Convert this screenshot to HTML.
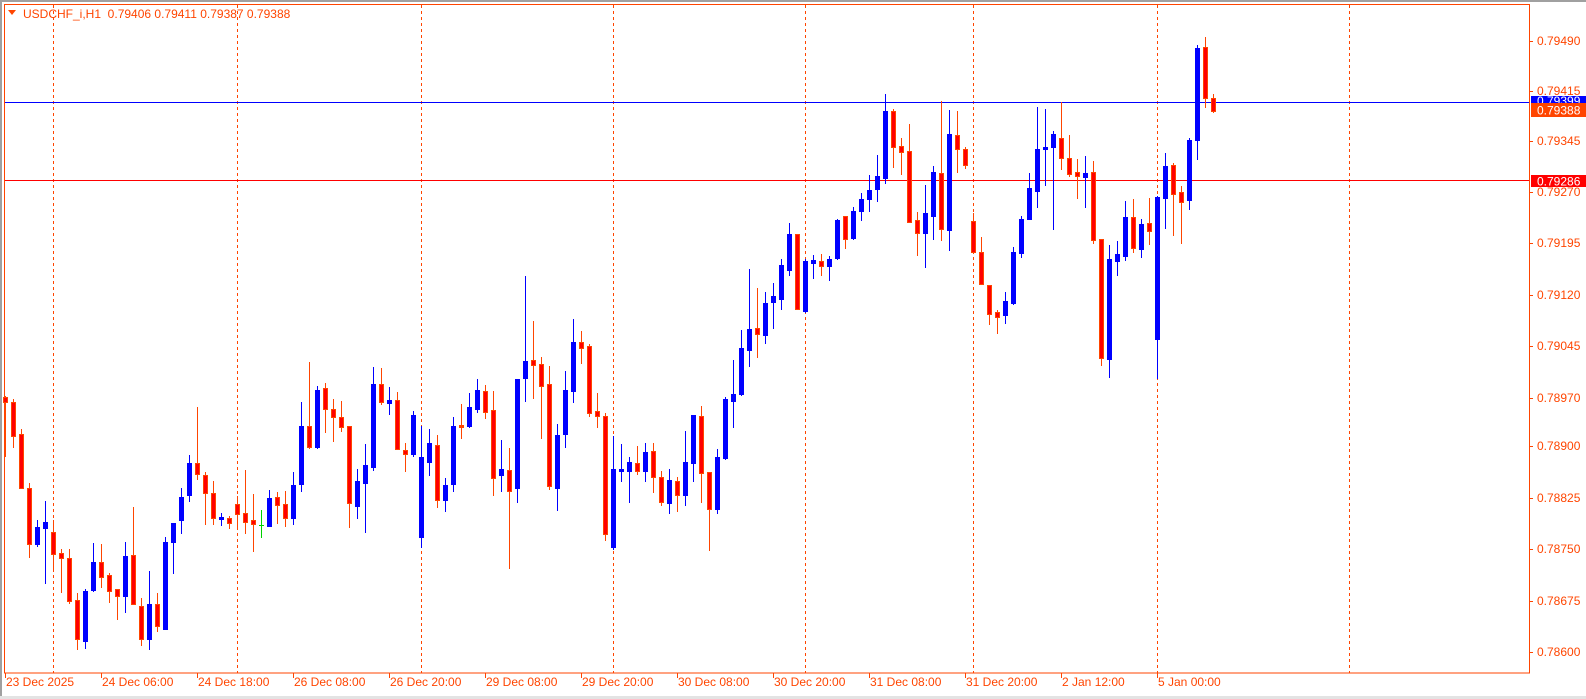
<!DOCTYPE html>
<html><head><meta charset="utf-8"><style>
html,body{margin:0;padding:0;background:#fff;width:1586px;height:699px;overflow:hidden}
svg{display:block;font-family:"Liberation Sans",sans-serif;font-size:12px}
</style></head><body>
<svg id="s" width="1586" height="699" xmlns="http://www.w3.org/2000/svg">
<rect x="0" y="0" width="1586" height="699" fill="#fff"/>
<rect x="0" y="0" width="1586" height="2" fill="#a0a0a0"/>
<rect x="0" y="0" width="2" height="699" fill="#a0a0a0"/>
<rect x="0" y="696" width="1586" height="3" fill="#e3e3e3"/>
<g stroke="#FF4500" stroke-width="1" stroke-dasharray="3,3">
<line x1="53.5" y1="5" x2="53.5" y2="673"/>
<line x1="237.5" y1="5" x2="237.5" y2="673"/>
<line x1="421.5" y1="5" x2="421.5" y2="673"/>
<line x1="613.5" y1="5" x2="613.5" y2="673"/>
<line x1="805.5" y1="5" x2="805.5" y2="673"/>
<line x1="973.5" y1="5" x2="973.5" y2="673"/>
<line x1="1157.5" y1="5" x2="1157.5" y2="673"/>
<line x1="1349.5" y1="5" x2="1349.5" y2="673"/>
</g>
<rect x="4.5" y="4.5" width="1525" height="668.5" fill="none" stroke="#FF4500" stroke-width="1"/>
<line x1="5" y1="102.5" x2="1529" y2="102.5" stroke="#0000FF"/>
<line x1="5" y1="180.5" x2="1529" y2="180.5" stroke="#FF0000"/>
<g id="c"></g>
<g fill="#FF4500">
<polygon points="8,10 16,10 12,15"/>
<text x="23" y="18" style="white-space:pre">USDCHF_i,H1  0.79406 0.79411 0.79387 0.79388</text>
</g>
<g id="ax" fill="#FF4500"></g>
<rect x="1531" y="96" width="55" height="8" fill="#0000FF"/>
<text x="1537" y="105" fill="#fff">0.79399</text>
<rect x="1531" y="103" width="55" height="14" fill="#FF4500"/>
<text x="1537" y="114.5" fill="#fff">0.79388</text>
<rect x="1531" y="175" width="55" height="12" fill="#FF0000"/>
<text x="1537" y="185.5" fill="#fff">0.79286</text>
</svg>
<script>
var d="r 397 402 396 456|r 402 436 399 447|r 434 488 429 488|r 488 544 483 557|b 527 544 520 546|b 522 528 501 583|r 532 554 520 571|r 553 558 549 592|r 558 601 549 603|r 600 639 593 649|b 591 641 589 648|b 562 590 543 591|r 562 577 544 587|r 575 591 573 602|r 589 596 589 619|b 556 596 542 612|r 555 604 507 604|r 606 639 598 645|b 604 639 571 649|r 604 626 593 631|b 542 629 537 629|b 523 542 523 573|b 497 520 488 533|b 463 495 455 501|r 463 474 407 479|r 475 493 472 524|r 493 518 481 524|b 517 519 513 525|r 518 523 516 528|r 504 514 496 528|r 513 522 470 533|r 520 524 494 551|g 525 525 510 537|b 498 526 490 526|r 497 505 492 523|r 504 518 491 526|b 485 518 472 524|b 426 484 402 491|r 426 447 362 448|b 390 447 386 448|r 388 409 383 432|r 409 417 399 441|r 417 427 401 431|r 426 503 426 527|b 481 506 469 518|b 465 483 444 532|b 384 467 367 470|r 384 402 368 404|b 400 403 387 414|r 400 449 392 449|r 450 454 443 471|b 415 454 411 456|b 457 537 426 547|b 443 462 429 475|r 445 500 435 507|b 485 500 478 511|b 426 484 417 491|r 425 427 404 438|b 407 426 393 427|b 390 409 379 412|r 391 412 385 418|r 410 478 391 495|b 469 475 440 491|r 470 491 448 568|b 379 488 379 502|b 361 378 276 401|r 360 365 321 398|r 364 386 357 438|r 384 486 366 489|b 435 488 424 510|b 390 434 371 447|b 342 391 319 402|r 342 348 331 363|r 346 413 344 416|r 411 416 393 427|r 416 534 413 540|b 469 547 436 549|b 469 471 444 481|b 462 471 457 502|r 463 471 446 474|b 452 471 443 481|r 451 477 443 492|r 477 502 471 505|b 480 503 469 513|r 481 495 477 511|b 462 495 431 505|b 415 463 415 481|r 416 473 406 502|r 472 509 472 550|b 457 509 449 513|b 399 458 397 459|b 394 401 360 427|b 348 394 330 395|b 329 350 269 366|r 328 334 288 357|b 303 335 292 343|b 296 302 283 328|b 265 299 259 309|b 234 270 223 275|r 234 309 234 309|b 261 311 259 312|b 260 263 255 278|r 261 266 254 275|b 259 266 256 280|b 220 258 219 259|r 216 239 216 248|b 211 238 207 239|b 199 211 193 220|b 190 199 175 211|b 176 189 155 201|b 111 178 94 183|r 111 147 109 167|r 146 152 138 174|r 151 222 124 222|r 220 233 212 255|b 213 233 185 267|b 172 216 166 239|r 173 229 101 240|b 134 230 110 250|r 135 149 111 172|r 149 165 147 168|r 221 252 213 252|r 252 284 237 284|r 285 314 285 324|r 312 317 310 333|b 301 315 292 323|b 252 303 247 304|b 219 253 216 257|b 188 219 173 219|b 149 191 107 207|b 147 149 109 185|b 134 147 131 229|r 138 158 102 169|r 158 174 135 176|r 172 176 159 198|b 173 177 156 207|r 172 240 161 243|r 239 358 239 365|b 259 359 245 377|b 254 261 241 275|b 217 256 201 260|r 217 248 199 252|b 224 249 219 257|r 223 231 198 244|b 197 339 196 378|b 166 198 153 228|r 165 194 163 235|r 192 202 186 243|b 140 200 138 209|b 48 140 45 159|r 47 98 37 107|r 98 111 94 112".split("|");
var h="";
d.forEach(function(s,i){var p=s.split(" "),t=p[0],o=+p[1],c=+p[2],hi=+p[3],lo=+p[4];var x=5+8*i;
var bh=Math.max(c-o,1);
if(t=="b"){h+='<rect x="'+x+'" y="'+hi+'" width="1" height="'+(lo-hi+1)+'" fill="#0000FF"/><rect x="'+(x-2)+'" y="'+o+'" width="5" height="'+(bh+1)+'" fill="#0000FF"/>';}
else if(t=="g"){h+='<rect x="'+x+'" y="'+hi+'" width="1" height="'+(lo-hi+1)+'" fill="#00D000"/><rect x="'+(x-2)+'" y="'+o+'" width="5" height="1" fill="#00D000"/>';}
else{h+='<rect x="'+x+'" y="'+hi+'" width="1" height="'+(lo-hi+1)+'" fill="#FF4500"/><rect x="'+(x-2)+'" y="'+o+'" width="5" height="'+(bh+1)+'" fill="#FF4500"/>';
if(bh>2)h+='<rect x="'+(x-1)+'" y="'+(o+1)+'" width="3" height="'+(bh-1)+'" fill="#FF0000"/>';}
});
document.getElementById("c").innerHTML=h;
var a="",pr=[["0.79490",40.7],["0.79415",90.7],["0.79345",140.5],["0.79270",191.7],["0.79195",243.3],["0.79120",294.8],["0.79045",346.3],["0.78970",397.9],["0.78900",446],["0.78825",497.5],["0.78750",549],["0.78675",600.5],["0.78600",652]];
pr.forEach(function(q){var y=Math.round(q[1]);a+='<rect x="1529" y="'+y+'" width="4" height="1"/><text x="1537" y="'+(y+4)+'">'+q[0]+'</text>';});
var lb=["23 Dec 2025","24 Dec 06:00","24 Dec 18:00","26 Dec 08:00","26 Dec 20:00","29 Dec 08:00","29 Dec 20:00","30 Dec 08:00","30 Dec 20:00","31 Dec 08:00","31 Dec 20:00","2 Jan 12:00","5 Jan 00:00"];
lb.forEach(function(l,k){var x=5+96*k;a+='<rect x="'+x+'" y="673" width="1" height="5"/><text x="'+(x+1)+'" y="686">'+l+'</text>';});
document.getElementById("ax").innerHTML=a;
</script>
</body></html>
